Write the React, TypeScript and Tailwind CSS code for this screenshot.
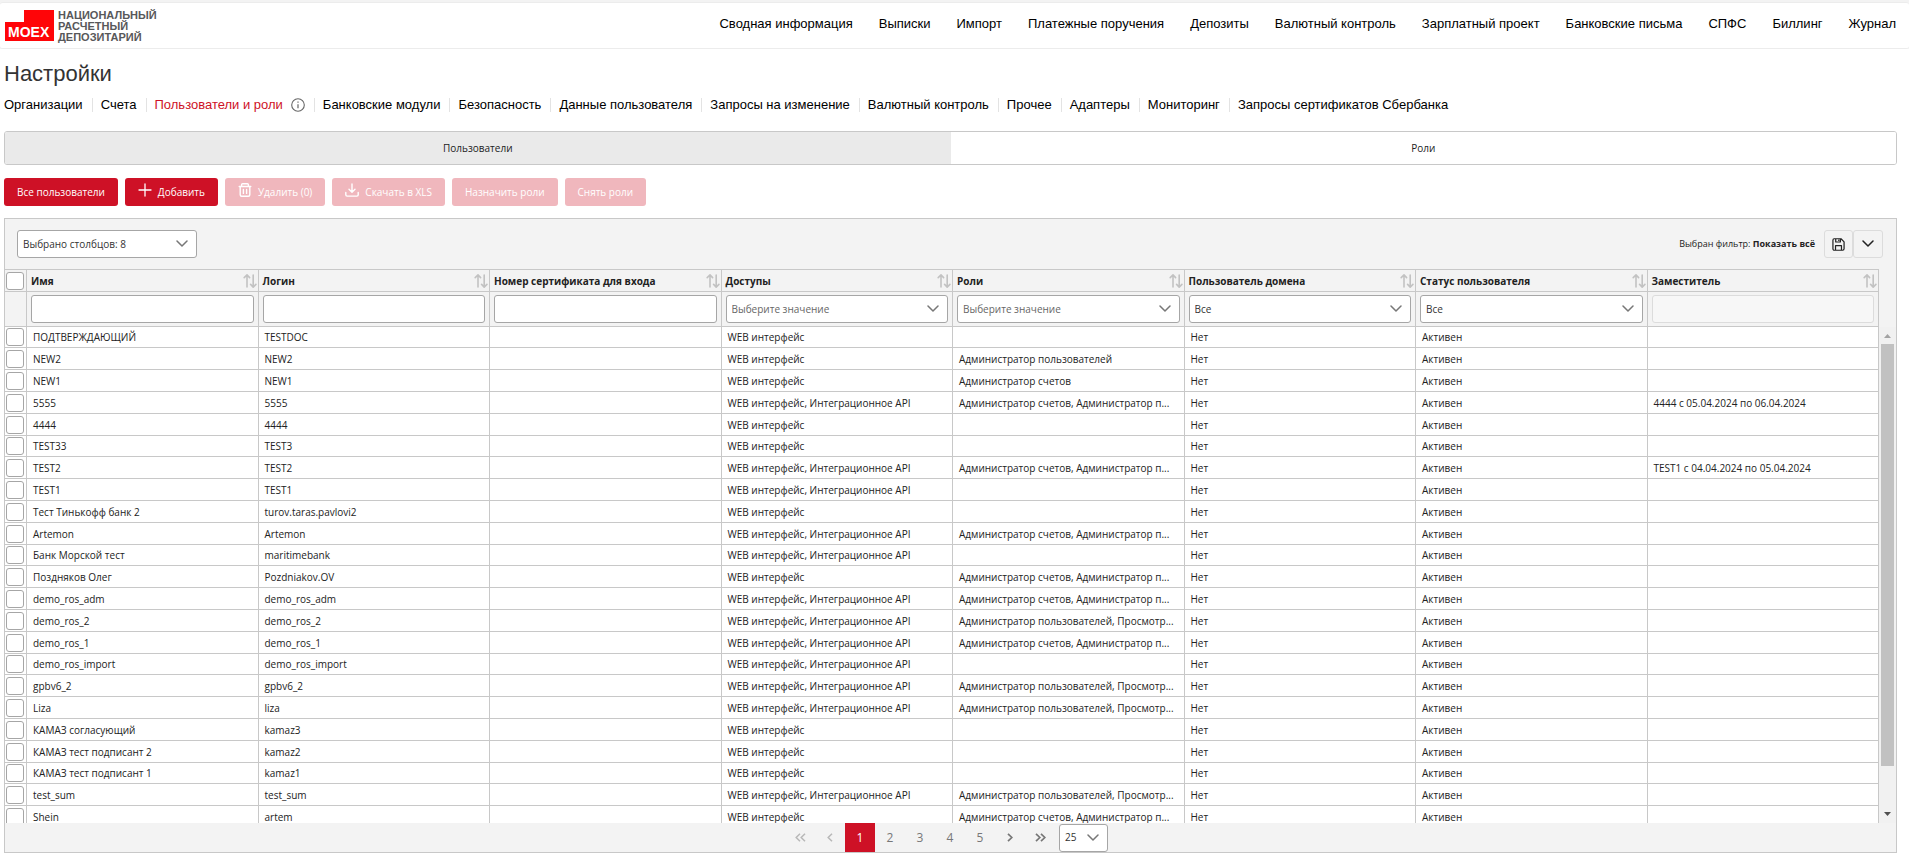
import React from 'react';

const topMenu = ['Сводная информация', 'Выписки', 'Импорт', 'Платежные поручения', 'Депозиты', 'Валютный контроль', 'Зарплатный проект', 'Банковские письма', 'СПФС', 'Биллинг', 'Журнал'];

const tabs = ['Организации', 'Счета', 'Пользователи и роли', 'Банковские модули', 'Безопасность', 'Данные пользователя', 'Запросы на изменение', 'Валютный контроль', 'Прочее', 'Адаптеры', 'Мониторинг', 'Запросы сертификатов Сбербанка'];

type Filter = 'text' | 'select' | 'all' | 'disabled';

const columns: { title: string; filter: Filter }[] = [
  { title: 'Имя', filter: 'text' },
  { title: 'Логин', filter: 'text' },
  { title: 'Номер сертификата для входа', filter: 'text' },
  { title: 'Доступы', filter: 'select' },
  { title: 'Роли', filter: 'select' },
  { title: 'Пользователь домена', filter: 'all' },
  { title: 'Статус пользователя', filter: 'all' },
  { title: 'Заместитель', filter: 'disabled' },
];

const WEB = 'WEB интерфейс';
const WEB_API = 'WEB интерфейс, Интеграционное API';
const ADMIN_ACC = 'Администратор счетов, Администратор п...';
const ADMIN_USR = 'Администратор пользователей, Просмотр...';

interface User {
  name: string;
  login: string;
  access: string;
  roles?: string;
  deputy?: string;
}

const users: User[] = [
  { name: 'ПОДТВЕРЖДАЮЩИЙ', login: 'TESTDOC', access: WEB },
  { name: 'NEW2', login: 'NEW2', access: WEB, roles: 'Администратор пользователей' },
  { name: 'NEW1', login: 'NEW1', access: WEB, roles: 'Администратор счетов' },
  { name: '5555', login: '5555', access: WEB_API, roles: ADMIN_ACC, deputy: '4444 с 05.04.2024 по 06.04.2024' },
  { name: '4444', login: '4444', access: WEB },
  { name: 'TEST33', login: 'TEST3', access: WEB },
  { name: 'TEST2', login: 'TEST2', access: WEB_API, roles: ADMIN_ACC, deputy: 'TEST1 с 04.04.2024 по 05.04.2024' },
  { name: 'TEST1', login: 'TEST1', access: WEB_API },
  { name: 'Тест Тинькофф банк 2', login: 'turov.taras.pavlovi2', access: WEB },
  { name: 'Artemon', login: 'Artemon', access: WEB_API, roles: ADMIN_ACC },
  { name: 'Банк Морской тест', login: 'maritimebank', access: WEB_API },
  { name: 'Поздняков Олег', login: 'Pozdniakov.OV', access: WEB, roles: ADMIN_ACC },
  { name: 'demo_ros_adm', login: 'demo_ros_adm', access: WEB_API, roles: ADMIN_ACC },
  { name: 'demo_ros_2', login: 'demo_ros_2', access: WEB_API, roles: ADMIN_USR },
  { name: 'demo_ros_1', login: 'demo_ros_1', access: WEB_API, roles: ADMIN_ACC },
  { name: 'demo_ros_import', login: 'demo_ros_import', access: WEB_API },
  { name: 'gpbv6_2', login: 'gpbv6_2', access: WEB_API, roles: ADMIN_USR },
  { name: 'Liza', login: 'liza', access: WEB_API, roles: ADMIN_USR },
  { name: 'КАМАЗ согласующий', login: 'kamaz3', access: WEB },
  { name: 'КАМАЗ тест подписант 2', login: 'kamaz2', access: WEB },
  { name: 'КАМАЗ тест подписант 1', login: 'kamaz1', access: WEB },
  { name: 'test_sum', login: 'test_sum', access: WEB_API, roles: ADMIN_USR },
  { name: 'Shein', login: 'artem', access: WEB, roles: ADMIN_ACC },
];

const ChevronDown = ({ className = '' }: { className?: string }) => (
  <svg className={`w-3 h-2 ${className}`} viewBox="0 0 12 8" fill="none" stroke="currentColor" strokeWidth="1.5" strokeLinecap="round" strokeLinejoin="round">
    <path d="M1 1l5 5 5-5" />
  </svg>
);

const PlusIcon = () => (
  <svg className="w-[14px] h-[14px] mb-1" viewBox="0 0 14 14" stroke="currentColor" strokeWidth="1.3" strokeLinecap="round">
    <path d="M7 1v12M1 7h12" />
  </svg>
);

const TrashIcon = () => (
  <svg className="w-[14px] h-[14px] mb-1" viewBox="0 0 14 14" fill="none" stroke="currentColor" strokeWidth="1.4" strokeLinecap="round" strokeLinejoin="round">
    <path d="M1.2 3.5h11.6M3.6 3.5V1.7c0-.6.4-1 1-1h4.8c.6 0 1 .4 1 1v1.8M2.2 3.5v8.3c0 .9.6 1.5 1.5 1.5h6.6c.9 0 1.5-.6 1.5-1.5V3.5M5.4 6.4v4M8.6 6.4v4" />
  </svg>
);

const DownloadIcon = () => (
  <svg className="w-[14px] h-[14px] mb-1" viewBox="0 0 14 14" fill="none" stroke="currentColor" strokeWidth="1.4" strokeLinecap="round" strokeLinejoin="round">
    <path d="M7 1v8M4 6.2L7 9.2l3-3M.8 9.5v2.3c0 .8.5 1.3 1.3 1.3h9.8c.8 0 1.3-.5 1.3-1.3V9.5" />
  </svg>
);

const InfoIcon = () => (
  <svg className="w-[14px] h-[14px] text-[#666]" viewBox="0 0 14 14" fill="none" stroke="currentColor">
    <circle cx="7" cy="7" r="6.3" strokeWidth="1.1" />
    <path d="M7 6.3v4M7 3.6v1.1" strokeWidth="1.2" />
  </svg>
);

const SaveIcon = () => (
  <svg className="w-[13px] h-[13px]" viewBox="0 0 14 14" fill="none" stroke="currentColor" strokeWidth="1.3" strokeLinejoin="round">
    <path d="M2.3.8h7.4l3.3 3.3v7.6c0 .9-.6 1.5-1.5 1.5h-9C1.6 13.2 1 12.6 1 11.7V2.3C1 1.4 1.5.8 2.3.8z" />
    <path d="M3.8 13V8.2h6.4V13M4 1v3.3h5V1M7.3 1.5v1.6" />
  </svg>
);

const SortIcon = () => (
  <svg className="w-[14px] h-[14px] shrink-0 text-[#c2c2c2]" viewBox="0 0 14 14" fill="none" stroke="currentColor" strokeWidth="1.6" strokeLinecap="round" strokeLinejoin="round">
    <path d="M4 13V1M1.2 3.6L4 .9l2.6 2.7M10.2 1v12M7.6 10.4l2.6 2.7 2.7-2.7" />
  </svg>
);

const Checkbox = ({ label }: { label: string }) => (
  <input type="checkbox" aria-label={label} className="appearance-none block w-[18px] h-[18px] ml-px bg-white border border-[#a6a6a6] rounded-[3px]" />
);

const FilterSelect = ({ label, value, muted }: { label: string; value: string; muted?: boolean }) => (
  <div className="relative">
    <select aria-label={label} className={`appearance-none block w-full h-7 px-[5px] bg-white border border-[#a6a6a6] rounded-[3px] ${muted ? 'text-[#666]' : 'text-[#333]'}`}>
      <option>{value}</option>
    </select>
    <ChevronDown className="absolute right-[9px] top-[10px] text-[#777] pointer-events-none" />
  </div>
);

const ColumnFilter = ({ title, filter }: { title: string; filter: Filter }) => {
  if (filter === 'select') return <FilterSelect label={title} value="Выберите значение" muted />;
  if (filter === 'all') return <FilterSelect label={title} value="Все" />;
  return (
    <input
      type="text"
      aria-label={title}
      disabled={filter === 'disabled'}
      className="block w-full h-7 px-[5px] bg-white border border-[#a6a6a6] rounded-[3px] disabled:bg-[#f7f7f7] disabled:border-[#dcdcdc]"
    />
  );
};

const ActionButton = ({ icon, disabled, children }: { icon?: React.ReactNode; disabled?: boolean; children: React.ReactNode }) => (
  <button disabled={disabled} className="flex items-center gap-[6px] h-7 px-[13px] bg-[#ce1126] text-white font-medium rounded-[3px] disabled:bg-[#f0b7bd]">
    {icon}
    {children}
  </button>
);

const Logo = () => (
  <a href="#" className="flex items-start gap-1 h-8" aria-label="MOEX">
    <span className="relative block w-[49px] h-[31px]">
      <svg className="absolute inset-0 text-[#ff0508]" width="49" height="31" viewBox="0 0 49 31" fill="currentColor">
        <path d="M19 0h30v31H0V12h19z" />
      </svg>
      <span className="absolute left-[3px] bottom-[2px] text-[14px] leading-[14px] font-bold text-white">MOEX</span>
    </span>
    <span className="text-[11px] leading-[11px] font-bold text-[#58585a]">
      НАЦИОНАЛЬНЫЙ<br />РАСЧЕТНЫЙ<br />ДЕПОЗИТАРИЙ
    </span>
  </a>
);

const App: React.FC = () => {
  return (
    <div className="flex flex-col h-screen pt-[2px] bg-[#f3f3f3] font-['Liberation_Sans',Arial,sans-serif] text-black">
      <header className="flex items-center justify-between h-[47px] shrink-0 pl-[5px] pr-[13px] bg-white border-y border-[#ececec] rounded-[3px]">
        <Logo />
        <nav className="flex gap-[26px] pb-1 text-[13px]">
          {topMenu.map((item) => (
            <a key={item} href="#">{item}</a>
          ))}
        </nav>
      </header>

      <main className="flex flex-col flex-1 min-h-0 pl-1 pr-3 pb-[13px] bg-white">
        <h1 className="mt-[11px] text-[22px] leading-7 text-[#333]">Настройки</h1>
        <nav className="flex items-center mt-[6px] h-[22px] text-[13px]">
          {tabs.map((tab) => (
            <div key={tab} className="flex items-center h-[14px] pr-[9px] mr-2 border-r border-[#e3e3e3] last:border-0">
              <a href="#" className={tab === 'Пользователи и роли' ? 'text-[#ce1126] mr-2' : ''}>{tab}</a>
              {tab === 'Пользователи и роли' && <InfoIcon />}
            </div>
          ))}
        </nav>

        <div className="flex flex-col flex-1 min-h-0 font-['Open_Sans','Noto_Sans',sans-serif] text-[10px] leading-4 text-[#222]">
          <div className="grid grid-cols-2 h-[34px] shrink-0 mt-[15px] border border-[#c8c8c8] rounded-[3px] overflow-hidden">
            <button className="bg-[#eaeaea]">Пользователи</button>
            <button className="bg-white">Роли</button>
          </div>

          <div className="flex gap-[7px] my-3 mt-[13px]">
            <ActionButton>Все пользователи</ActionButton>
            <ActionButton icon={<PlusIcon />}>Добавить</ActionButton>
            <ActionButton icon={<TrashIcon />} disabled>Удалить (0)</ActionButton>
            <ActionButton icon={<DownloadIcon />} disabled>Скачать в XLS</ActionButton>
            <ActionButton disabled>Назначить роли</ActionButton>
            <ActionButton disabled>Снять роли</ActionButton>
          </div>

          <section className="flex flex-col flex-1 min-h-0 border border-[#c8c8c8] bg-[#f3f3f3]">
            <div className="flex items-center justify-between h-[50px] shrink-0 pl-3 pr-[13px]">
              <div className="w-[180px]">
                <FilterSelect label="Столбцы" value="Выбрано столбцов: 8" />
              </div>
              <div className="flex items-center">
                <span className="mr-[9px] text-[9px]">Выбран фильтр: <b>Показать всё</b></span>
                <button aria-label="Сохранить фильтр" className="flex items-center justify-center w-[29px] h-7 border border-[#dcdcdc] rounded-[3px]"><SaveIcon /></button>
                <button aria-label="Фильтры" className="flex items-center justify-center w-[30px] h-7 border border-[#dcdcdc] rounded-[3px]"><ChevronDown /></button>
              </div>
            </div>

            <div className="flex flex-1 min-h-0 overflow-hidden">
              <div className="flex-1 overflow-hidden">
                <table className="w-full table-fixed border-separate border-spacing-0 text-left">
                  <colgroup>
                    <col className="w-[22px]" />
                    {columns.map((c) => <col key={c.title} />)}
                  </colgroup>
                  <thead>
                    <tr className="h-[23px]">
                      <th className="p-0 border-y border-r border-[#c8c8c8]"><Checkbox label="Выбрать всех" /></th>
                      {columns.map((c) => (
                        <th key={c.title} className="py-0 pl-1 pr-px border-y border-r border-[#c8c8c8] font-bold">
                          <div className="flex items-center justify-between">
                            <span>{c.title}</span>
                            <SortIcon />
                          </div>
                        </th>
                      ))}
                    </tr>
                    <tr className="h-[35px]">
                      <td className="border-b border-r border-[#c8c8c8]" />
                      {columns.map((c) => (
                        <td key={c.title} className="px-1 py-0 border-b border-r border-[#c8c8c8]">
                          <ColumnFilter title={c.title} filter={c.filter} />
                        </td>
                      ))}
                    </tr>
                  </thead>
                  <tbody className="bg-white">
                    {users.map((u, i) => (
                      <tr key={u.name} className={i % 5 === 0 ? 'h-[21px]' : 'h-[22px]'}>
                        <td className="p-0 border-b border-r border-[#c8c8c8]"><Checkbox label={u.name} /></td>
                        {[u.name, u.login, '', u.access, u.roles, 'Нет', 'Активен', u.deputy].map((value, n) => (
                          <td key={n} className="pl-[6px] pr-0 py-0 border-b border-r border-[#c8c8c8] truncate">{value}</td>
                        ))}
                      </tr>
                    ))}
                  </tbody>
                </table>
              </div>
              <div className="flex flex-col w-[17px] shrink-0 pt-[58px]">
                <div className="flex flex-col items-center flex-1 bg-[#f1f1f1]">
                  <svg className="w-[17px] h-[17px] shrink-0 text-[#a3a3a3]" viewBox="0 0 17 17" fill="currentColor"><path d="M5 11h7L8.5 7z" /></svg>
                  <div className="w-[13px] h-[85%] bg-[#c1c1c1]" />
                  <svg className="w-[17px] h-[17px] mt-auto shrink-0 text-[#505050]" viewBox="0 0 17 17" fill="currentColor"><path d="M5 6h7l-3.5 4z" /></svg>
                </div>
              </div>
            </div>

            <div className="flex items-center justify-center h-[29px] shrink-0 pr-2 text-xs text-[#777]">
              <button disabled aria-label="Первая" className="w-[30px] flex justify-center text-[#b8b8b8]">
                <svg width="11" height="9" viewBox="0 0 11 9" fill="none" stroke="currentColor" strokeWidth="1.5"><path d="M5 .8L1.2 4.5 5 8.2M10 .8L6.2 4.5 10 8.2" /></svg>
              </button>
              <button disabled aria-label="Предыдущая" className="w-[30px] flex justify-center text-[#b8b8b8]">
                <svg width="6" height="9" viewBox="0 0 6 9" fill="none" stroke="currentColor" strokeWidth="1.5"><path d="M5 .8L1.2 4.5 5 8.2" /></svg>
              </button>
              <button className="w-[30px] h-[29px] bg-[#ce1126] text-white">1</button>
              {[2, 3, 4, 5].map((p) => (
                <button key={p} className="w-[30px] h-[29px]">{p}</button>
              ))}
              <button aria-label="Следующая" className="w-[30px] flex justify-center">
                <svg width="6" height="9" viewBox="0 0 6 9" fill="none" stroke="currentColor" strokeWidth="1.7"><path d="M1 .8l3.8 3.7L1 8.2" /></svg>
              </button>
              <button aria-label="Последняя" className="w-[30px] flex justify-center">
                <svg width="11" height="9" viewBox="0 0 11 9" fill="none" stroke="currentColor" strokeWidth="1.7"><path d="M1 .8l3.8 3.7L1 8.2M6 .8l3.8 3.7L6 8.2" /></svg>
              </button>
              <div className="w-[49px] ml-1 text-[10px]">
                <FilterSelect label="Строк на странице" value="25" />
              </div>
            </div>
          </section>
        </div>
      </main>
    </div>
  );
};

export default App;
